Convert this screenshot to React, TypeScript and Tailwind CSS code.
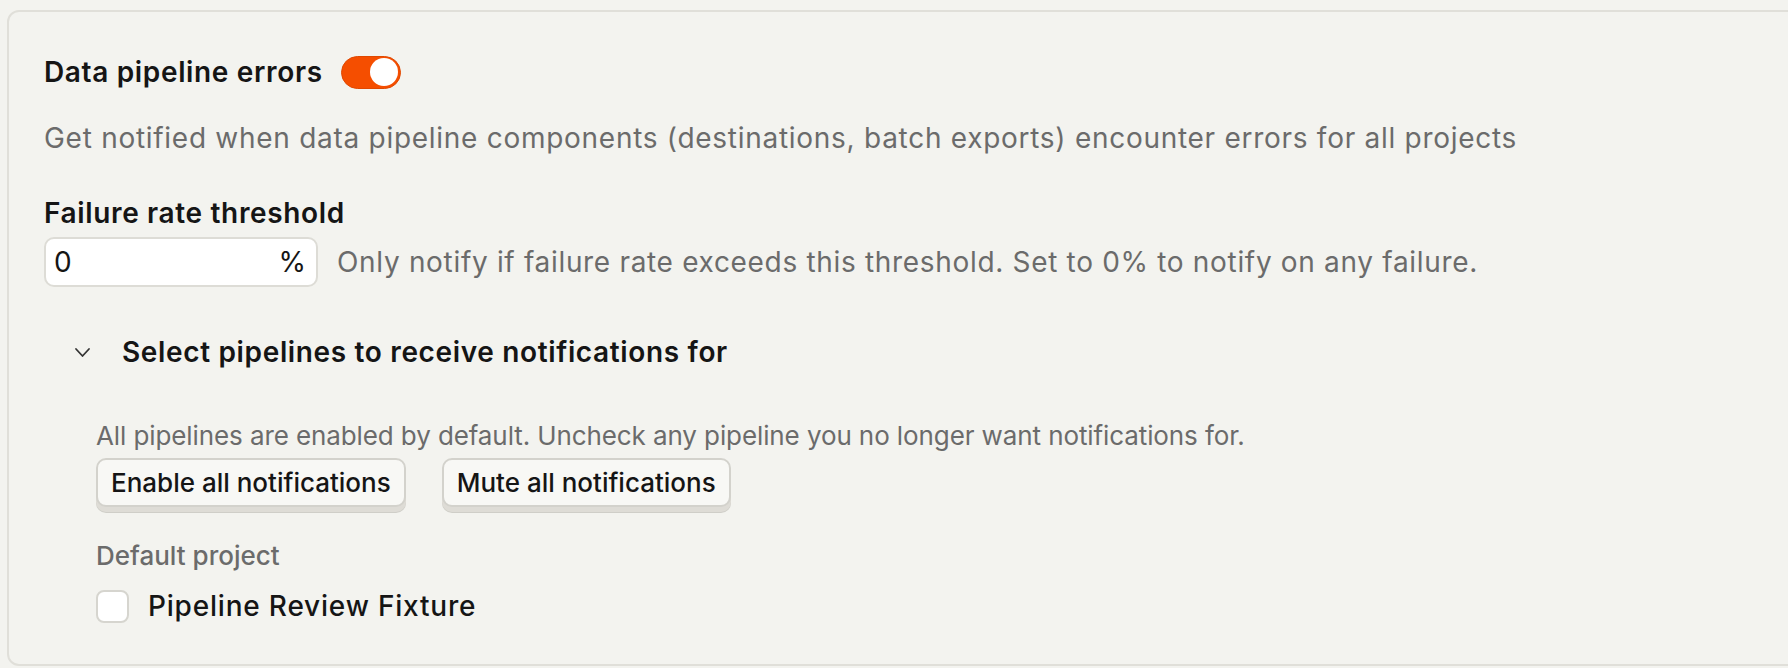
import { useState } from "react";

const GRAY = "text-[#6b6b6b]";

function Toggle({ on, onChange }: { on: boolean; onChange: () => void }) {
	return (
		<button
			onClick={onChange}
			aria-pressed={on}
			className={`w-[60px] h-[33px] rounded-full border flex items-center px-[2px] ${
				on ? "bg-[#f54e00] border-[#e04800] justify-end" : "bg-[#d6d5cf] border-[#c9c8c2] justify-start"
			}`}>
			<span className="w-[28px] h-[28px] rounded-full bg-white" />
		</button>
	);
}

function LemonButton({ children }: { children: React.ReactNode }) {
	return (
		<button className="h-[49px] px-[13px] rounded-[10px] border-2 border-[#d3d2cc] bg-[#f8f8f5] text-[26px] font-medium text-[#151515] shadow-[0_5px_0_0_#dedcd6,0_6px_0_0_#cfcec8]">
			{children}
		</button>
	);
}

export default function App() {
	const [enabled, setEnabled] = useState(true);
	const [checked, setChecked] = useState(false);

	return (
		<div className="h-[668px] overflow-hidden bg-[#f3f3ef] pt-[10px] pl-[7px] font-[Inter,'Noto_Sans',sans-serif] text-[#151515]">
			<div className="w-[1820px] h-[656px] rounded-[12px] border-2 border-[#e0dfd9] bg-[#f3f3ef] pt-[40px] pl-[35px]">
				{/* Toggle row */}
				<div className="flex items-center gap-[18px] h-[40px]">
					<span className="text-[28px] leading-[40px] font-semibold tracking-[0.65px]">Data pipeline errors</span>
					<Toggle on={enabled} onChange={() => setEnabled((v) => !v)} />
				</div>
				<p className={`mt-[26px] text-[28px] leading-[40px] tracking-[0.72px] ${GRAY}`}>
					Get notified when data pipeline components (destinations, batch exports) encounter errors for all projects
				</p>

				{/* Threshold */}
				<div className="mt-[35px] text-[28px] leading-[40px] font-semibold tracking-[0.65px]">Failure rate threshold</div>
				<div className="mt-[4px] flex items-center gap-[19px]">
					<div className="w-[274px] h-[50px] bg-white border-2 border-[#dddcd6] rounded-[10px] flex items-center justify-between pl-[8px] pr-[10px] text-[28px]">
						<span>0</span>
						<span>%</span>
					</div>
					<span className={`text-[28px] leading-[40px] tracking-[0.68px] ${GRAY}`}>
						Only notify if failure rate exceeds this threshold. Set to 0% to notify on any failure.
					</span>
				</div>

				{/* Pipelines collapsible */}
				<div className="mt-[45px] ml-[30px] flex items-center gap-[31px] h-[40px]">
					<svg width="17" height="11" viewBox="0 0 17 11" fill="none" stroke="#333" strokeWidth="1.8" strokeLinecap="round" strokeLinejoin="round">
						<polyline points="2,2 8.5,9 15,2" />
					</svg>
					<span className="text-[28px] leading-[40px] font-semibold tracking-[0.65px]">Select pipelines to receive notifications for</span>
				</div>

				<div className="ml-[52px]">
					<p className={`mt-[46px] text-[26px] leading-[36px] tracking-[-0.1px] ${GRAY}`}>
						All pipelines are enabled by default. Uncheck any pipeline you no longer want notifications for.
					</p>
					<div className="mt-[4px] flex items-center gap-[36px]">
						<LemonButton>Enable all notifications</LemonButton>
						<LemonButton>Mute all notifications</LemonButton>
					</div>
					<div className={`mt-[31px] text-[26px] leading-[36px] font-medium ${GRAY}`}>Default project</div>
					<label className="mt-[12px] flex items-center gap-[19px] cursor-pointer">
						<input
							type="checkbox"
							checked={checked}
							onChange={() => setChecked((v) => !v)}
							className="appearance-none w-[33px] h-[33px] rounded-[8px] border-2 border-[#d6d5cf] bg-white checked:bg-[#f54e00]"
						/>
						<span className="text-[28px] leading-[40px] font-medium tracking-[0.8px]">Pipeline Review Fixture</span>
					</label>
				</div>
			</div>
		</div>
	);
}
